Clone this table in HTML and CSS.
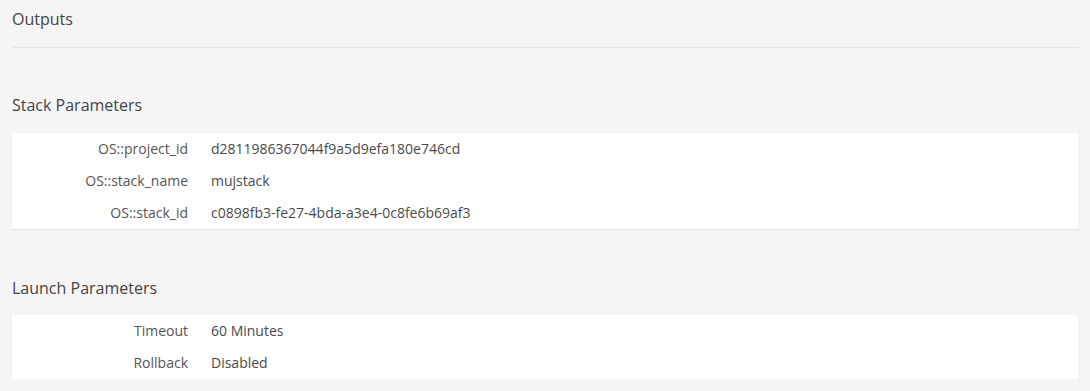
FILE: index.html
```html
<!DOCTYPE html>
<html>
<head>
<meta charset="utf-8">
<link rel="stylesheet" href="styles.css">
</head>
<body>
<div class="page">
  <h3 class="heading heading-outputs">Outputs</h3>

  <h3 class="heading heading-section">Stack Parameters</h3>
  <dl class="panel">
    <dt>OS::project_id</dt><dd>d2811986367044f9a5d9efa180e746cd</dd>
    <dt>OS::stack_name</dt><dd>mujstack</dd>
    <dt>OS::stack_id</dt><dd>c0898fb3-fe27-4bda-a3e4-0c8fe6b69af3</dd>
  </dl>

  <h3 class="heading heading-section heading-launch">Launch Parameters</h3>
  <dl class="panel">
    <dt>Timeout</dt><dd>60 Minutes</dd>
    <dt>Rollback</dt><dd>Disabled</dd>
  </dl>
</div>
</body>
</html>
```

FILE: styles.css
```css
html, body {
  margin: 0;
  padding: 0;
  background: #f5f5f5;
}
body {
  font-family: "Open Sans", "Liberation Sans", sans-serif;
  color: #4a4a4a;
}
.page {
  padding: 0 12px;
}
.heading {
  margin: 0;
  font-size: 16px;
  font-weight: 400;
  line-height: 20px;
  color: #444;
}
.heading-outputs {
  padding-top: 9px;
  padding-bottom: 18px;
  border-bottom: 1px solid #e6e6e6;
}
.heading-section {
  margin-top: 47px;
}
.heading-launch {
  margin-top: 49px;
}
.panel {
  margin: 18px 0 0;
  background: #fff;
  box-shadow: 0 1px 1px rgba(0,0,0,0.06), 0 0 1px rgba(0,0,0,0.05);
  display: grid;
  grid-template-columns: 176px 1fr;
  column-gap: 23px;
  font-size: 14px;
}
.heading-launch + .panel {
  margin-top: 17px;
}
.panel dt, .panel dd {
  margin: 0;
  line-height: 32px;
  height: 32px;
}
.panel dt {
  text-align: right;
  color: #555;
}
.panel dd {
  color: #4a4a4a;
}
```
